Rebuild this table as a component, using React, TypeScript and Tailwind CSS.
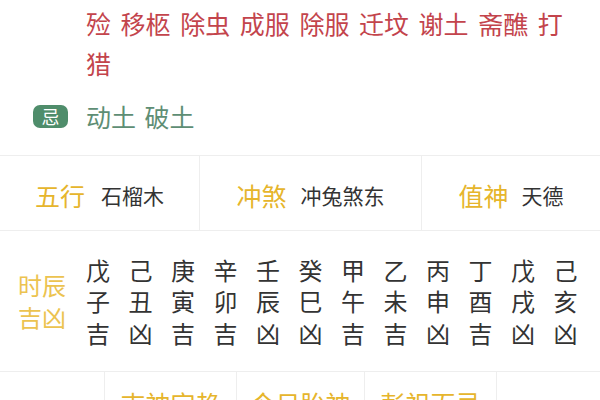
const yi = "殓 移柩 除虫 成服 除服 迁坟 谢土 斋醮 打猎";

const hours = [
  ["戊", "子", "吉"],
  ["己", "丑", "凶"],
  ["庚", "寅", "吉"],
  ["辛", "卯", "吉"],
  ["壬", "辰", "凶"],
  ["癸", "巳", "凶"],
  ["甲", "午", "吉"],
  ["乙", "未", "吉"],
  ["丙", "申", "凶"],
  ["丁", "酉", "吉"],
  ["戊", "戌", "凶"],
  ["己", "亥", "凶"],
];

const App: React.FC = () => {
  return (
    <div
      className="w-[600px] h-[400px] overflow-hidden bg-white"
      style={{ fontFamily: '"Noto Sans CJK SC", "Noto Sans", sans-serif' }}
    >
      {/* 宜 / 忌 */}
      <div className="pt-[3px] pb-[24px]">
        <p className="ml-[86px] w-[490px] text-[25px] leading-[40px] text-[#c3444c] [word-spacing:4px] break-all">
          {yi}
        </p>
        <div className="flex items-center h-[30px] mt-[18px]">
          <span className="ml-[33px] w-[35px] h-[23px] rounded-[7px] bg-[#4f8d6b] text-white text-[18px] leading-[23px] text-center">
            忌
          </span>
          <span className="ml-[18px] text-[25px] leading-[30px] text-[#5e8e74] [word-spacing:3px]">
            动土 破土
          </span>
        </div>
      </div>

      {/* 五行 冲煞 值神 */}
      <div className="flex border-y border-[#eeeeee] h-[76px]">
        <div className="w-[200px] flex items-center justify-center pt-[6px] border-r border-[#eeeeee]">
          <span className="text-[25px] text-[#e6b52c]">五行</span>
          <span className="ml-[16px] text-[21px] text-[#333333]">石榴木</span>
        </div>
        <div className="w-[222px] flex items-center justify-center pt-[6px] border-r border-[#eeeeee]">
          <span className="text-[25px] text-[#e6b52c]">冲煞</span>
          <span className="ml-[14px] text-[21px] text-[#333333]">冲兔煞东</span>
        </div>
        <div className="flex-1 flex items-center justify-center pt-[6px]">
          <span className="text-[25px] text-[#e6b52c]">值神</span>
          <span className="ml-[13px] text-[21px] text-[#333333]">天德</span>
        </div>
      </div>

      {/* 时辰吉凶 */}
      <div className="flex items-center h-[141px] border-b border-[#eeeeee]">
        <div className="w-[86px] flex flex-col items-center text-[24px] leading-[32px] text-[#ecc350] pr-[2px]">
          <span>时辰</span>
          <span>吉凶</span>
        </div>
        <div className="flex">
          {hours.map((h, i) => (
            <div
              key={i}
              className="w-[42.5px] flex flex-col text-[24px] leading-[31.5px] text-[#333333]"
            >
              {h.map((c, j) => (
                <span key={j}>{c}</span>
              ))}
            </div>
          ))}
        </div>
      </div>

      {/* bottom row */}
      <div className="flex h-[60px]">
        <div className="w-[105px] border-r border-[#eeeeee]"></div>
        <div className="w-[132px] flex justify-center pt-[13px] border-r border-[#eeeeee]">
          <span className="text-[25px] leading-[36px] text-[#e6b52c]">吉神宜趋</span>
        </div>
        <div className="w-[128px] flex justify-center pt-[13px] border-r border-[#eeeeee]">
          <span className="text-[25px] leading-[36px] text-[#e6b52c]">今日胎神</span>
        </div>
        <div className="w-[132px] flex justify-center pt-[13px] border-r border-[#eeeeee]">
          <span className="text-[25px] leading-[36px] text-[#e6b52c]">彭祖百忌</span>
        </div>
        <div className="flex-1"></div>
      </div>
    </div>
  );
};

export default App;
